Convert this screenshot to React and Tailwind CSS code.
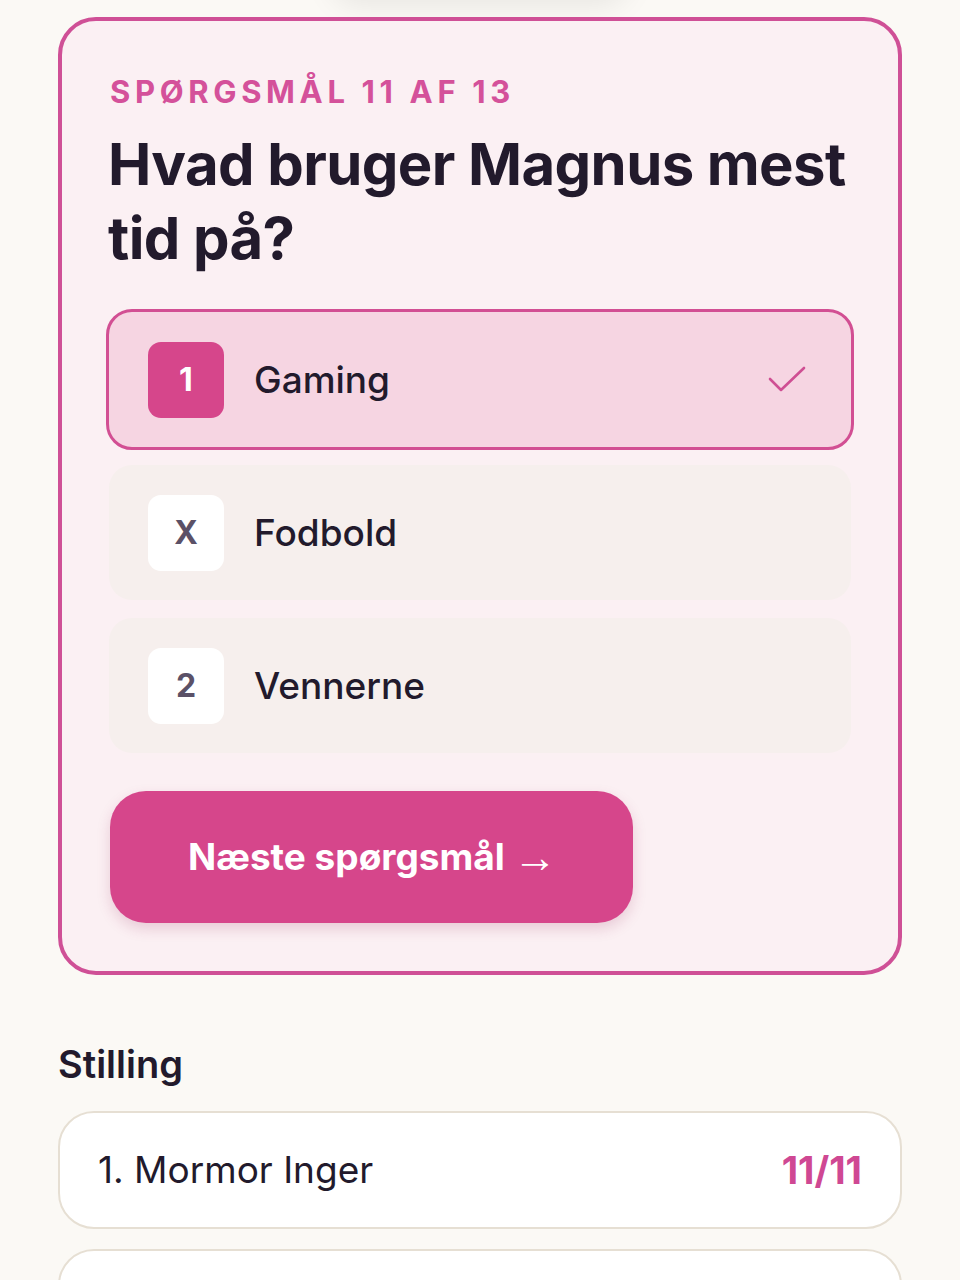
import React from "react";

const options = [
  { key: "1", label: "Gaming", selected: true },
  { key: "X", label: "Fodbold" },
  { key: "2", label: "Vennerne" },
];

const standings = [
  { name: "1. Mormor Inger", score: "11/11" },
  { name: "2. Far", score: "9/11" },
];

function Check() {
  return (
    <svg width="40" height="32" viewBox="0 0 40 32" fill="none" className="text-[#cf4f93]">
      <path d="M3 15 L14 26 L37 4" stroke="currentColor" strokeWidth="2.6" strokeLinecap="round" strokeLinejoin="round" />
    </svg>
  );
}

export default function App() {
  return (
    <div className="min-h-screen bg-[#fbf9f5] text-[#221a2c] font-['Inter',sans-serif] overflow-hidden">
      {/* shadow of the card scrolled off above */}
      <div className="mx-auto -mt-[60px] h-[60px] w-[300px] rounded-[40px] bg-[#fbf9f5] shadow-[0_6px_30px_rgba(0,0,0,0.08)]" />

      <div className="px-[58px] pt-[17px] pb-10">
        <div className="rounded-[38px] border-[4px] border-[#cf5096] bg-[#fbf0f3] px-[44px] pt-[53px] pb-[48px]">
          <div className="pl-[4px] text-[31px] leading-[36px] font-bold tracking-[0.15em] text-[#d4519a]">
            SPØRGSMÅL 11 AF 13
          </div>
          <h1 className="mt-[17px] pl-[2px] text-[58px] leading-[74px] font-bold tracking-[-0.01em] text-[#221a2c]">
            Hvad bruger Magnus mest tid på?
          </h1>

          <div className="mt-[34px] flex flex-col gap-[12px]">
            {options.map((o) => (
              <div
                key={o.key}
                className={
                  o.selected
                    ? "flex h-[141px] items-center rounded-[26px] border-[3px] border-[#d24f93] bg-[#f6d5e2] pl-[39px] pr-[44px]"
                    : "flex h-[141px] items-center rounded-[26px] border-[3px] border-transparent bg-[#f6efed] bg-clip-padding pl-[39px] pr-[44px]"
                }
              >
                <div
                  className={
                    o.selected
                      ? "flex h-[76px] w-[76px] items-center justify-center rounded-[13px] bg-[#d6468b] text-[32px] font-bold text-white"
                      : "flex h-[76px] w-[76px] items-center justify-center rounded-[13px] bg-white text-[32px] font-bold text-[#5b5167]"
                  }
                >
                  {o.key}
                </div>
                <div className="ml-[30px] flex-1 text-[37px] font-medium text-[#221a2c]">{o.label}</div>
                {o.selected && <Check />}
              </div>
            ))}
          </div>

          <button className="ml-[4px] mt-[35px] flex h-[132px] items-center rounded-[36px] bg-[#d6468b] pl-[78px] pr-[76px] text-[37px] font-bold text-white shadow-[0_6px_14px_rgba(150,40,90,0.18)]">
            Næste spørgsmål
            <span className="ml-[8px] font-['Liberation_Sans',sans-serif] text-[44px] font-normal leading-none">→</span>
          </button>
        </div>

        <h2 className="mt-[67px] text-[38px] leading-[44px] font-semibold text-[#221a2c]">Stilling</h2>

        <div className="mt-[25px] flex flex-col gap-[20px]">
          {standings.map((s) => (
            <div
              key={s.name}
              className="flex h-[118px] items-center justify-between rounded-[36px] border-2 border-[#e6dfd3] bg-white px-[38px]"
            >
              <span className="text-[37px] font-normal text-[#221a2c]">{s.name}</span>
              <span className="text-[38px] font-bold text-[#cf4893]">{s.score}</span>
            </div>
          ))}
        </div>
      </div>
    </div>
  );
}
